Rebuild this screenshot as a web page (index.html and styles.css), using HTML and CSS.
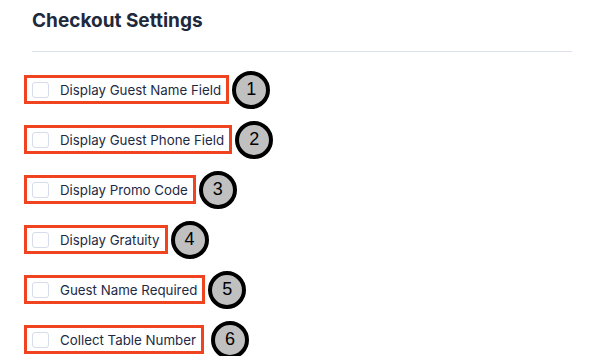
FILE: index.html
```html
<!DOCTYPE html>
<html lang="en">
<head>
  <meta charset="UTF-8" />
  <meta name="viewport" content="width=device-width, initial-scale=1.0"/>
  <title>Checkout Settings</title>
  <link rel="stylesheet" href="styles.css">
</head>
<body>
  <div class="panel">
    <h2 class="title">Checkout Settings</h2>
    <div class="options">
      <div class="option">
        <label class="field"><input type="checkbox" class="check" /><span>Display Guest Name Field</span></label>
        <span class="marker">1</span>
      </div>
      <div class="option">
        <label class="field"><input type="checkbox" class="check" /><span>Display Guest Phone Field</span></label>
        <span class="marker">2</span>
      </div>
      <div class="option">
        <label class="field"><input type="checkbox" class="check" /><span>Display Promo Code</span></label>
        <span class="marker">3</span>
      </div>
      <div class="option">
        <label class="field"><input type="checkbox" class="check" /><span>Display Gratuity</span></label>
        <span class="marker">4</span>
      </div>
      <div class="option">
        <label class="field"><input type="checkbox" class="check" /><span>Guest Name Required</span></label>
        <span class="marker">5</span>
      </div>
      <div class="option">
        <label class="field"><input type="checkbox" class="check" /><span>Collect Table Number</span></label>
        <span class="marker wide">6</span>
      </div>
    </div>
  </div>
</body>
</html>
```

FILE: styles.css
```css
body { margin: 0; background: #fff; font-family: Inter, "Open Sans", sans-serif; color: #1e2a44; }
.panel { padding: 0 36px 0 32px; }
.title {
  margin: 0;
  padding: 10px 0 19px;
  font-size: 19px;
  font-weight: 700;
  line-height: 22px;
  color: #1e293b;
  border-bottom: 1px solid #dce1ec;
}
.options { display: flex; flex-direction: column; gap: 17px; padding-top: 21px; margin-left: -8px; }
.option { display: flex; align-items: center; height: 33px; }
.field {
  display: flex;
  align-items: center;
  gap: 11px;
  height: 29px;
  box-sizing: border-box;
  padding: 0 5px;
  border: 3px solid #f0431f;
  font-size: 13.3px;
}
.check {
  appearance: none;
  margin: 0;
  width: 17px;
  height: 16px;
  border: 1px solid #d6dcea;
  border-radius: 3px;
  background: #fff;
}
.marker {
  margin-left: 3px;
  width: 30px;
  height: 30px;
  border: 4px solid #000;
  border-radius: 50%;
  background: #c0c0c0;
  display: flex;
  align-items: center;
  justify-content: center;
  font-family: "Liberation Sans", Arial, sans-serif;
  font-size: 18px;
  color: #000;
}
.marker.wide { margin-left: 7px; }
```
